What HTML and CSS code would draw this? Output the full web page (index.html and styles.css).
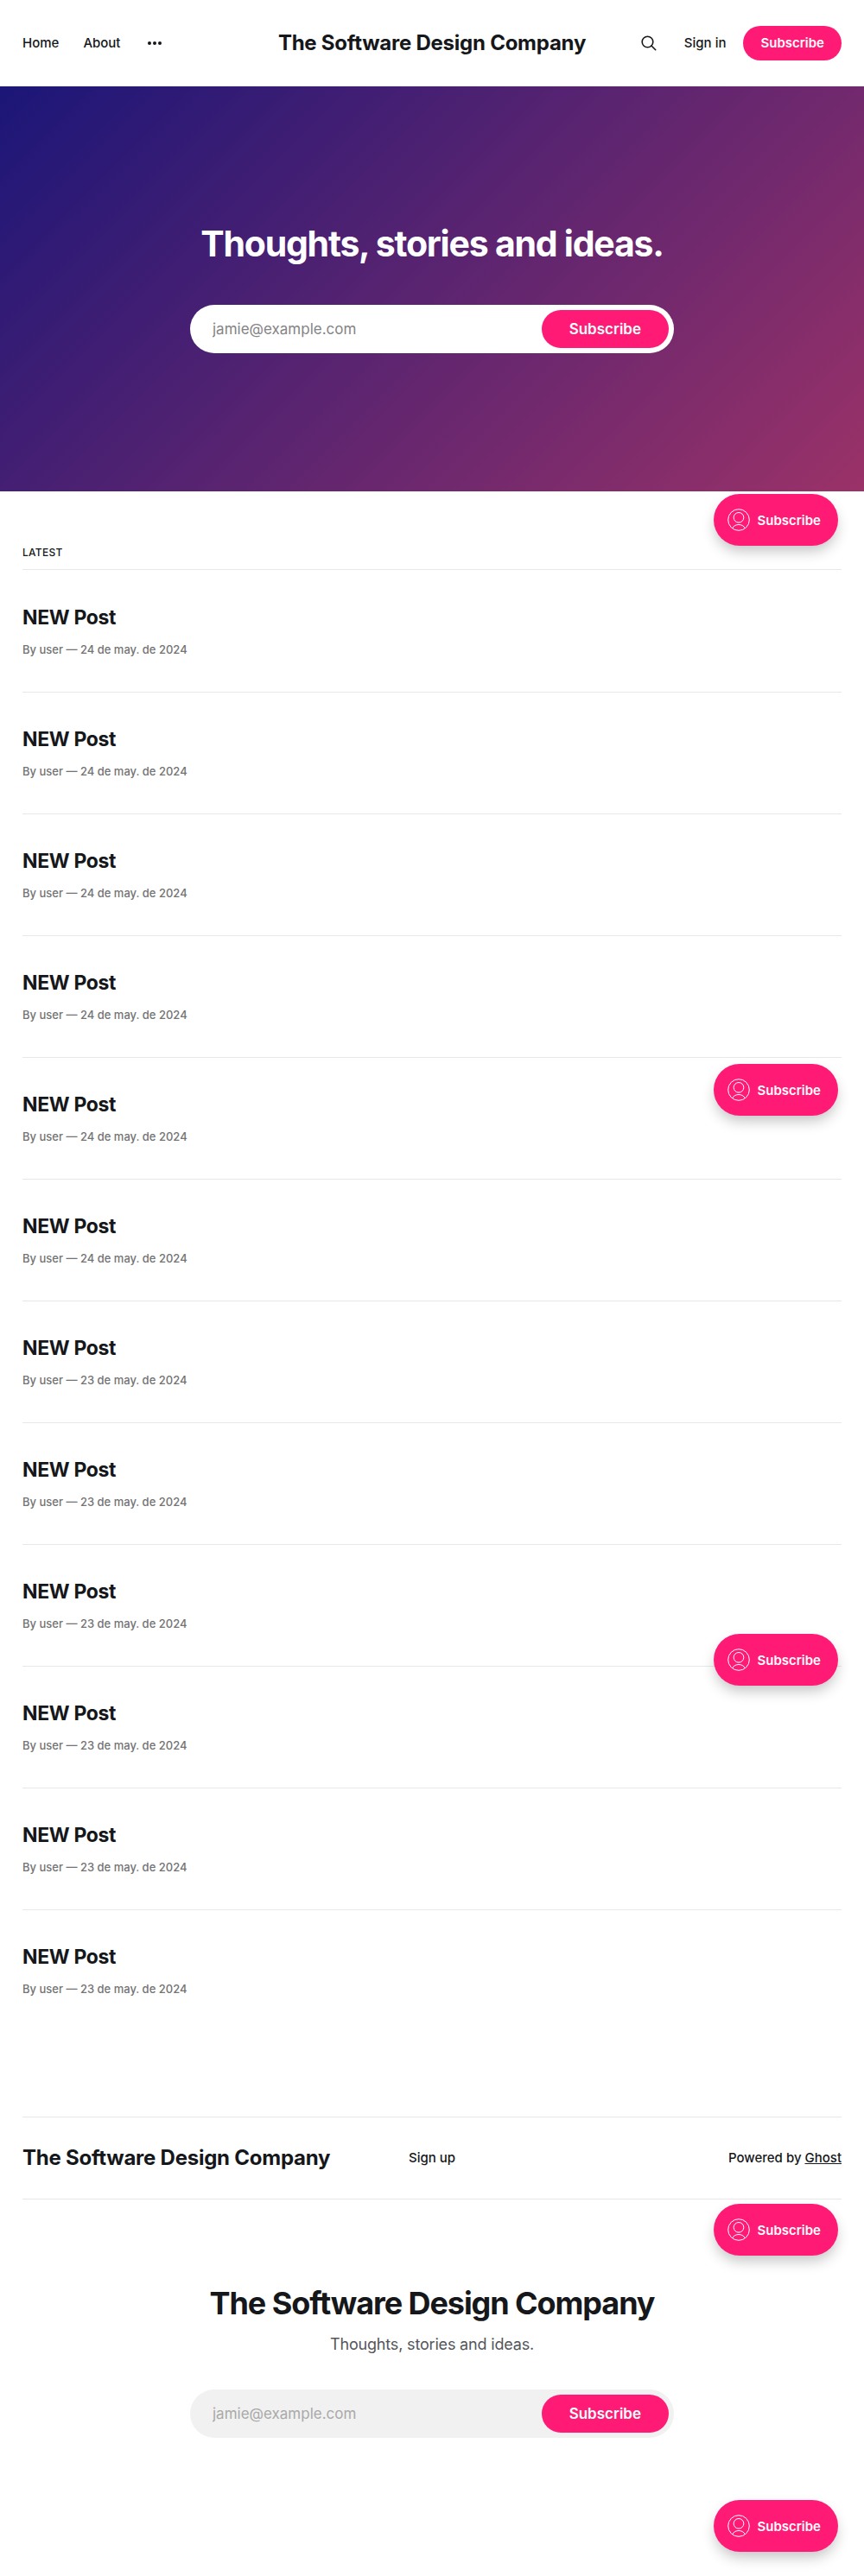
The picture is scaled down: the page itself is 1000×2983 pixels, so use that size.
FILE: index.html
```html
<!DOCTYPE html>
<html lang="en">
<head>
<meta charset="utf-8">
<meta name="viewport" content="width=device-width, initial-scale=1">
<title>The Software Design Company</title>
<link rel="stylesheet" href="styles.css">
</head>
<body>
<svg class="sprite" aria-hidden="true">
  <symbol id="user" viewBox="0 0 26 26" fill="none" stroke="currentColor">
    <circle cx="13" cy="13" r="12.3"/><circle cx="13" cy="10.3" r="5.8"/><path d="M5.6 22.8c1.5-3 4.400-4.300 7.400-4.300s5.900 1.300 7.400 4.300"/>
  </symbol>
</svg>
<header class="header">
  <nav class="nav">
    <a href="#">Home</a>
    <a href="#">About</a>
    <button class="icon-button" aria-label="More"><svg width="16" height="16" viewBox="0 0 16 16" fill="currentColor"><circle cx="2" cy="8" r="2"/><circle cx="8" cy="8" r="2"/><circle cx="14" cy="8" r="2"/></svg></button>
  </nav>
  <a class="brand" href="#">The Software Design Company</a>
  <div class="actions">
    <button class="icon-button" aria-label="Search"><svg width="18" height="18" viewBox="0 0 18 18" fill="none" stroke="currentColor" stroke-width="1.600" stroke-linecap="round"><circle cx="7.500" cy="7.500" r="6.300"/><path d="M12 12l4.700 4.700"/></svg></button>
    <a class="signin" href="#">Sign in</a>
    <a class="button" href="#">Subscribe</a>
  </div>
</header>
<section class="hero">
  <h1>Thoughts, stories and ideas.</h1>
  <form class="form">
    <input type="email" placeholder="jamie@example.com" aria-label="Email address">
    <button type="button">Subscribe</button>
  </form>
</section>
<main class="feed">
  <h2 class="section-title">Latest</h2>
  <article class="post"><h3><a href="#">NEW Post</a></h3><p>By user — <time>24 de may. de 2024</time></p></article>
  <article class="post"><h3><a href="#">NEW Post</a></h3><p>By user — <time>24 de may. de 2024</time></p></article>
  <article class="post"><h3><a href="#">NEW Post</a></h3><p>By user — <time>24 de may. de 2024</time></p></article>
  <article class="post"><h3><a href="#">NEW Post</a></h3><p>By user — <time>24 de may. de 2024</time></p></article>
  <article class="post"><h3><a href="#">NEW Post</a></h3><p>By user — <time>24 de may. de 2024</time></p></article>
  <article class="post"><h3><a href="#">NEW Post</a></h3><p>By user — <time>24 de may. de 2024</time></p></article>
  <article class="post"><h3><a href="#">NEW Post</a></h3><p>By user — <time>23 de may. de 2024</time></p></article>
  <article class="post"><h3><a href="#">NEW Post</a></h3><p>By user — <time>23 de may. de 2024</time></p></article>
  <article class="post"><h3><a href="#">NEW Post</a></h3><p>By user — <time>23 de may. de 2024</time></p></article>
  <article class="post"><h3><a href="#">NEW Post</a></h3><p>By user — <time>23 de may. de 2024</time></p></article>
  <article class="post"><h3><a href="#">NEW Post</a></h3><p>By user — <time>23 de may. de 2024</time></p></article>
  <article class="post"><h3><a href="#">NEW Post</a></h3><p>By user — <time>23 de may. de 2024</time></p></article>
</main>
<footer class="footer">
  <div class="footer-bar">
    <a class="brand" href="#">The Software Design Company</a>
    <a href="#">Sign up</a>
    <div class="powered">Powered by <a href="#">Ghost</a></div>
  </div>
  <section class="signup">
    <h2>The Software Design Company</h2>
    <p>Thoughts, stories and ideas.</p>
    <form class="form form-muted">
      <input type="email" placeholder="jamie@example.com" aria-label="Email address">
      <button type="button">Subscribe</button>
    </form>
  </section>
</footer>
<button class="trigger trigger-1"><svg width="26" height="26"><use href="#user"/></svg>Subscribe</button>
<button class="trigger trigger-2"><svg width="26" height="26"><use href="#user"/></svg>Subscribe</button>
<button class="trigger trigger-3"><svg width="26" height="26"><use href="#user"/></svg>Subscribe</button>
<button class="trigger trigger-4"><svg width="26" height="26"><use href="#user"/></svg>Subscribe</button>
<button class="trigger trigger-5"><svg width="26" height="26"><use href="#user"/></svg>Subscribe</button>
</body>
</html>
```
FILE: styles.css
```css
:root {
  --accent: #ff1a75;
  --ink: #15171a;
  --line: #e8e8e8;
}
* { box-sizing: border-box; }
body {
  position: relative;
  margin: 0;
  background: #fff;
  color: var(--ink);
  font-family: Inter, sans-serif;
  font-size: 15px;
  font-weight: 550;
  line-height: 24px;
}
h1, h2, h3, p { margin: 0; }
a { color: inherit; text-decoration: none; }
button { border: 0; font-family: inherit; cursor: pointer; }
.sprite { display: none; }

.header {
  display: grid;
  grid-template-columns: 1fr auto 1fr;
  align-items: center;
  height: 100px;
  padding: 0 26px;
}
.nav { display: flex; align-items: center; gap: 28px; }
.icon-button { display: flex; padding: 0; background: none; color: inherit; }
.nav .icon-button { padding-left: 4px; }
.brand { font-size: 24px; font-weight: 725; letter-spacing: -0.01em; white-space: nowrap; }
.actions { display: flex; align-items: center; justify-content: flex-end; }
.signin { margin: 0 20px 0 32px; }
.button {
  padding: 8px 20px;
  border-radius: 20px;
  background: var(--accent);
  color: #fff;
  font-weight: 600;
}

.hero {
  display: flex;
  flex-direction: column;
  align-items: center;
  padding: 156px 26px 160px;
  background: linear-gradient(135deg, #1b1678, #9b3268);
  color: #fff;
}
.hero h1 { font-size: 41px; font-weight: 700; line-height: 52px; letter-spacing: -0.03em; }
.form {
  display: flex;
  width: 100%;
  max-width: 560px;
  height: 56px;
  padding: 6px;
  border-radius: 28px;
  background: #fff;
}
.hero .form { margin-top: 45px; }
.form input {
  flex: 1;
  min-width: 0;
  padding: 0 20px;
  border: 0;
  outline: 0;
  background: none;
  font-family: inherit;
  font-size: 17px;
}
.form input::placeholder { color: #848484; }
.form button {
  padding: 0 32px;
  border-radius: 22px;
  background: var(--accent);
  color: #fff;
  font-size: 17px;
  font-weight: 600;
}
.form-muted { background: #f1f1f1; }
.form-muted input::placeholder { color: #a9a9a9; }

.feed { padding: 61px 26px 99px; }
.section-title {
  padding-bottom: 9px;
  border-bottom: 1px solid var(--line);
  font-size: 12px;
  font-weight: 550;
  line-height: 20px;
  letter-spacing: 0.025em;
  text-transform: uppercase;
}
.post { padding: 39px 0; border-top: 1px solid var(--line); }
.section-title + .post { border-top-color: transparent; }
.post h3 { font-size: 23px; font-weight: 725; line-height: 30px; letter-spacing: -0.015em; }
.post p { margin-top: 12px; color: #737373; font-size: 13px; line-height: 20px; }

.footer { padding: 0 26px; }
.footer-bar {
  display: grid;
  grid-template-columns: 1fr auto 1fr;
  align-items: center;
  padding: 35px 0;
  border-top: 1px solid var(--line);
  border-bottom: 1px solid var(--line);
}
.powered { text-align: right; }
.powered a { text-decoration: underline; }
.signup { display: flex; flex-direction: column; align-items: center; padding: 96px 0 160px; }
.signup h2 { font-size: 36px; font-weight: 700; line-height: 48px; letter-spacing: -0.03em; }
.signup p { margin-top: 12px; color: #54565a; font-size: 18px; font-weight: 400; line-height: 24px; letter-spacing: -0.01em; }
.signup .form { margin-top: 40px; }

.trigger {
  position: absolute;
  right: 30px;
  display: flex;
  align-items: center;
  gap: 8px;
  height: 60px;
  padding: 0 20px 0 16px;
  border-radius: 30px;
  background: var(--accent);
  box-shadow: 0 8px 16px -2px rgba(0, 0, 0, 0.24);
  color: #fff;
  font-size: 15px;
  font-weight: 600;
}
.trigger-1 { top: 572px; }
.trigger-2 { top: 1232px; }
.trigger-3 { top: 1892px; }
.trigger-4 { top: 2552px; }
.trigger-5 { bottom: 28px; }
```
